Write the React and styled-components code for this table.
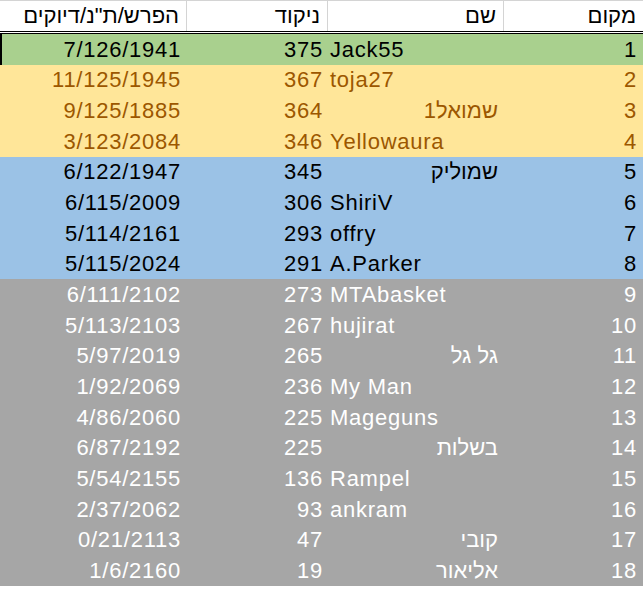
import React from "react";
import styled, { createGlobalStyle } from "styled-components";

const GlobalStyle = createGlobalStyle`
  html, body { margin: 0; padding: 0; background: #ffffff; }
  body { font-family: "Liberation Sans", Arial, sans-serif; }
`;

const COLS = "140px 176px 141px 186px";

const Sheet = styled.div`
  width: 643px;
  direction: rtl;
  font-family: "Liberation Sans", Arial, sans-serif;
  font-size: 22px;
`;

const HeaderRow = styled.div`
  display: grid;
  grid-template-columns: ${COLS};
  height: 30px;
  border-top: 1px solid #d4d4d4;
  border-bottom: 3px double #000000;
  background: #ffffff;
  color: #000000;
`;

const HeaderCell = styled.div`
  display: flex;
  align-items: flex-end;
  justify-content: flex-start;
  padding: 0 7px 3px 3px;
  border-left: ${(p) => (p.$last ? "none" : "1px solid #d4d4d4")};
  line-height: 25px;
  white-space: nowrap;
  overflow: hidden;
`;

const TIERS = {
  green: { bg: "#a9d08e", fg: "#000000" },
  yellow: { bg: "#ffe699", fg: "#9c5700" },
  blue: { bg: "#9bc2e6", fg: "#000000" },
  gray: { bg: "#a6a6a6", fg: "#ffffff" },
};

const Row = styled.div`
  display: grid;
  grid-template-columns: ${COLS};
  height: 30.67px;
  background: ${(p) => TIERS[p.$tier].bg};
  color: ${(p) => TIERS[p.$tier].fg};
  box-shadow: ${(p) => (p.$selected ? "inset 2px 0 0 #000000" : "none")};
`;

const Cell = styled.div`
  display: flex;
  align-items: flex-end;
  justify-content: flex-start;
  padding-bottom: 3px;
  line-height: 25px;
  white-space: nowrap;
  overflow: hidden;
`;

const NumCell = styled(Cell)`
  direction: ltr;
  justify-content: flex-end;
  letter-spacing: 0.75px;
  padding-left: 3px;
  padding-right: ${(p) => p.$pr}px;
`;

const NameCell = styled(Cell)`
  padding-right: 5px;
  padding-left: 3px;
  letter-spacing: ${(p) => (p.$rtl ? "0" : "0.75px")};
`;

const rows = [
  [1, "Jack55", 375, "7/126/1941"],
  [2, "toja27", 367, "11/125/1945"],
  [3, "שמואל1", 364, "9/125/1885"],
  [4, "Yellowaura", 346, "3/123/2084"],
  [5, "שמוליק", 345, "6/122/1947"],
  [6, "ShiriV", 306, "6/115/2009"],
  [7, "offry", 293, "5/114/2161"],
  [8, "A.Parker", 291, "5/115/2024"],
  [9, "MTAbasket", 273, "6/111/2102"],
  [10, "hujirat", 267, "5/113/2103"],
  [11, "גל גל", 265, "5/97/2019"],
  [12, "My Man", 236, "1/92/2069"],
  [13, "Mageguns", 225, "4/86/2060"],
  [14, "בשלות", 225, "6/87/2192"],
  [15, "Rampel", 136, "5/54/2155"],
  [16, "ankram", 93, "2/37/2062"],
  [17, "קובי", 47, "0/21/2113"],
  [18, "אליאור", 19, "1/6/2160"],
];

const tierOf = (rank) =>
  rank === 1 ? "green" : rank <= 4 ? "yellow" : rank <= 8 ? "blue" : "gray";

const isHebrew = (s) => /[\u0590-\u05FF]/.test(s);

export default function App() {
  return (
    <>
      <GlobalStyle />
      <Sheet>
        <HeaderRow>
          <HeaderCell>מקום</HeaderCell>
          <HeaderCell>שם</HeaderCell>
          <HeaderCell>ניקוד</HeaderCell>
          <HeaderCell $last>הפרש/ת"נ/דיוקים</HeaderCell>
        </HeaderRow>
        {rows.map(([rank, name, score, diff]) => {
          const heb = isHebrew(name);
          return (
            <Row key={rank} $tier={tierOf(rank)} $selected={rank === 1}>
              <NumCell $pr={6}>{rank}</NumCell>
              <NameCell $rtl={heb} dir={heb ? "rtl" : "ltr"}>
                {name}
              </NameCell>
              <NumCell $pr={4}>{score}</NumCell>
              <NumCell $pr={5}>{diff}</NumCell>
            </Row>
          );
        })}
      </Sheet>
    </>
  );
}
